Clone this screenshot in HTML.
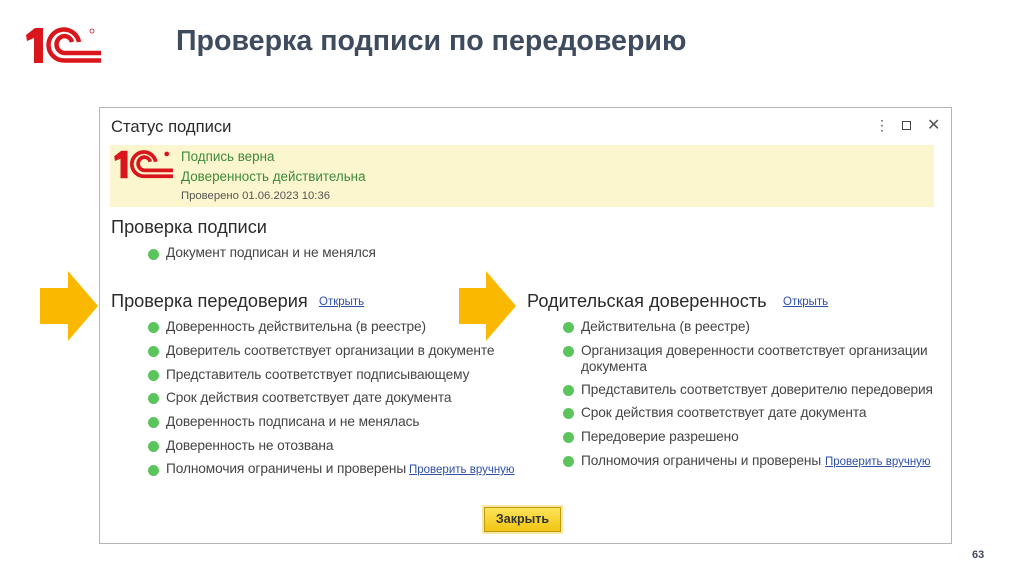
<!DOCTYPE html>
<html><head><meta charset="utf-8"><style>
*{margin:0;padding:0;box-sizing:border-box}
body{width:1024px;height:574px;background:#fff;position:relative;overflow:hidden;font-family:"Liberation Sans",sans-serif;color:#3d3d3d}
.a{position:absolute;white-space:nowrap}
.title{left:176px;top:25px;font-size:28.6px;font-weight:bold;color:#3f4b5e}
.win{left:99px;top:107px;width:853px;height:437px;border:1.5px solid #b5b5b5;background:#fff}
.band{left:110px;top:145px;width:824px;height:62px;background:#fcf6cf}
.h{font-size:18.2px;color:#2b2b2b}
.it{font-size:13.7px;color:#444;letter-spacing:-0.1px}
.d{position:absolute;width:11px;height:11px;border-radius:50%;background:#5cc45c}
.lnk{font-size:11.5px;color:#2e4ea8;text-decoration:underline}
.g{font-size:13.4px;color:#3d8a3d}
.btn{left:484px;top:507px;width:77px;height:25px;background:linear-gradient(#fbe45a,#f1c512);border:1px solid #bf9a10;box-shadow:0 0 0 2px #f6e9a8;font-size:12.5px;font-weight:bold;color:#333;text-align:center;line-height:23px}
</style></head><body>
<svg class="a" style="left:26px;top:27px" width="76" height="37" viewBox="0 0 76 37">
<path d="M0 8 L9 1 L17 1 L17 36 L8 36 L8 11 L1 14 Z" fill="#d9161c"/>
<g fill="none" stroke="#d9161c" stroke-width="4.5">
<path d="M75 33.5 H38 A15.5 15.5 0 0 1 38 2.5 A15.5 15.5 0 0 1 53 15"/>
<path d="M75 26 H39 A8.5 8.5 0 0 1 39 9 A8.5 8.5 0 0 1 46 15"/>
</g>
<circle cx="66" cy="4" r="2" fill="none" stroke="#d9161c" stroke-width="0.8"/>
</svg>
<div class="a title">Проверка подписи по передоверию</div>
<div class="a win"></div>
<div class="a" style="left:111px;top:117px;font-size:16.6px;color:#2b2b2b">Статус подписи</div>
<div class="a" style="left:875px;top:117px;font-size:14px;color:#555">⋮</div>
<div class="a" style="left:902px;top:121px;width:9px;height:9px;border:1.8px solid #444"></div>
<div class="a" style="left:927px;top:115px;font-size:16px;color:#555">✕</div>
<div class="a band"></div>
<svg class="a" style="left:114px;top:150px" width="60" height="29" viewBox="0 0 76 37">
<path d="M0 8 L9 1 L17 1 L17 36 L8 36 L8 11 L1 14 Z" fill="#d9161c"/>
<g fill="none" stroke="#d9161c" stroke-width="4.8">
<path d="M75 33.5 H38 A15.5 15.5 0 0 1 38 2.5 A15.5 15.5 0 0 1 53 15"/>
<path d="M75 26 H39 A8.5 8.5 0 0 1 39 9 A8.5 8.5 0 0 1 46 15"/>
</g>
<circle cx="67" cy="5" r="3" fill="#d9161c"/>
</svg>
<div class="a g" style="left:181px;top:149px">Подпись верна</div>
<div class="a g" style="left:181px;top:169px">Доверенность действительна</div>
<div class="a" style="left:181px;top:190px;font-size:11.3px;color:#555">Проверено 01.06.2023 10:36</div>

<div class="a h" style="left:111px;top:217px">Проверка подписи</div>
<div class="d" style="left:148px;top:249px"></div><div class="a it" style="left:166px;top:245px">Документ подписан и не менялся</div>

<div class="a h" style="left:111px;top:291px">Проверка передоверия</div>
<div class="a lnk" style="left:319px;top:296px">Открыть</div>
<div class="d" style="left:148px;top:322px"></div><div class="a it" style="left:166px;top:319px">Доверенность действительна (в реестре)</div>
<div class="d" style="left:148px;top:346px"></div><div class="a it" style="left:166px;top:343px">Доверитель соответствует организации в документе</div>
<div class="d" style="left:148px;top:370px"></div><div class="a it" style="left:166px;top:367px">Представитель соответствует подписывающему</div>
<div class="d" style="left:148px;top:393px"></div><div class="a it" style="left:166px;top:390px">Срок действия соответствует дате документа</div>
<div class="d" style="left:148px;top:417px"></div><div class="a it" style="left:166px;top:414px">Доверенность подписана и не менялась</div>
<div class="d" style="left:148px;top:441px"></div><div class="a it" style="left:166px;top:438px">Доверенность не отозвана</div>
<div class="d" style="left:148px;top:465px"></div><div class="a it" style="left:166px;top:461px">Полномочия ограничены и проверены</div>
<div class="a lnk" style="left:409px;top:464px">Проверить вручную</div>

<div class="a h" style="left:527px;top:291px">Родительская доверенность</div>
<div class="a lnk" style="left:783px;top:296px">Открыть</div>
<div class="d" style="left:563px;top:322px"></div><div class="a it" style="left:581px;top:319px">Действительна (в реестре)</div>
<div class="d" style="left:563px;top:346px"></div><div class="a it" style="left:581px;top:343px">Организация доверенности соответствует организации</div>
<div class="a it" style="left:581px;top:359px">документа</div>
<div class="d" style="left:563px;top:385px"></div><div class="a it" style="left:581px;top:382px">Представитель соответствует доверителю передоверия</div>
<div class="d" style="left:563px;top:408px"></div><div class="a it" style="left:581px;top:405px">Срок действия соответствует дате документа</div>
<div class="d" style="left:563px;top:432px"></div><div class="a it" style="left:581px;top:429px">Передоверие разрешено</div>
<div class="d" style="left:563px;top:456px"></div><div class="a it" style="left:581px;top:453px">Полномочия ограничены и проверены</div>
<div class="a lnk" style="left:825px;top:456px">Проверить вручную</div>

<svg class="a" style="left:40px;top:271px" width="58" height="70"><path d="M0 17 H28 V0 L58 35 L28 70 V53 H0 Z" fill="#fbb800"/></svg>
<svg class="a" style="left:459px;top:271px" width="57" height="70"><path d="M0 17 H27 V0 L57 35 L27 70 V53 H0 Z" fill="#fbb800"/></svg>

<div class="a btn">Закрыть</div>
<div class="a" style="left:972px;top:549px;font-size:11px;font-weight:bold;color:#3f4b5e">63</div>
</body></html>
